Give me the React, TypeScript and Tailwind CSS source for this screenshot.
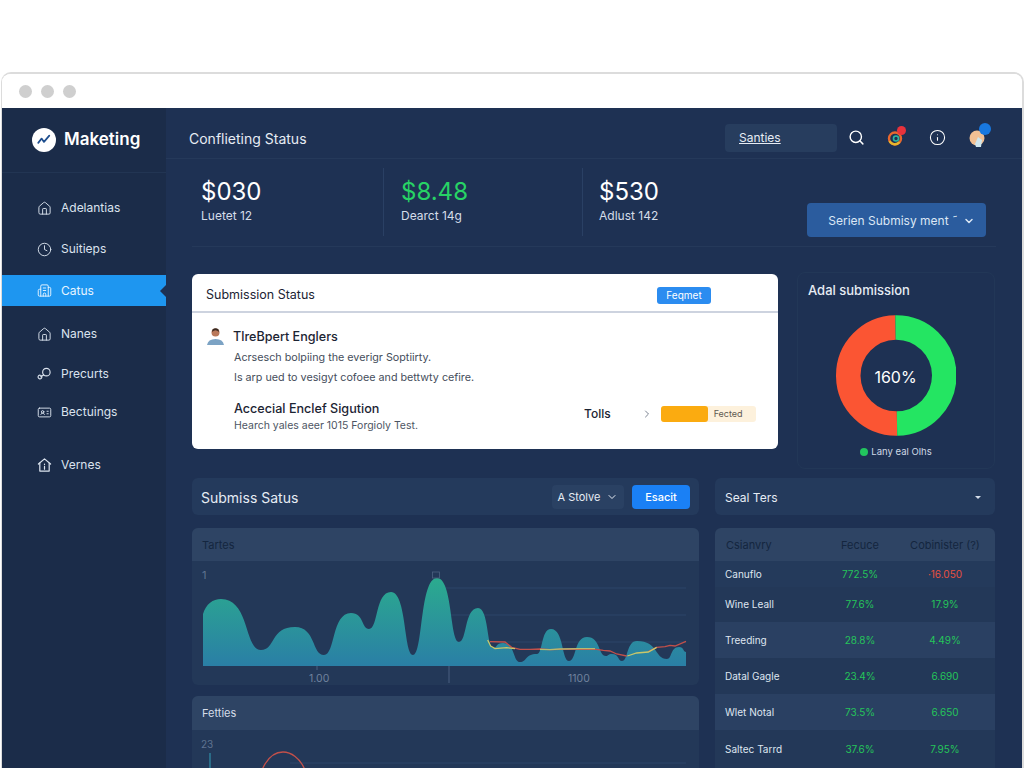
import React from "react";
import { Search, ChevronDown, ChevronRight, Info, House, Clock, Building2, IdCard } from "lucide-react";

type P = [number, number];

function smooth(points: P[]) {
  let d = "";
  for (let i = 1; i < points.length; i++) {
    const [x0, y0] = points[i - 1];
    const [x1, y1] = points[i];
    const w = x1 - x0;
    const goingDown = y1 > y0;
    const k0 = goingDown ? 0.72 : 0.42;
    const k1 = goingDown ? 0.42 : 0.72;
    d += ` C${x0 + w * k0} ${y0} ${x1 - w * k1} ${y1} ${x1} ${y1}`;
  }
  return d;
}

const area: P[] = [
  [221, 599], [261, 650], [295, 627], [324, 655], [351, 613], [369, 629], [391, 592], [413, 655], [437, 578],
  [459, 642], [478, 608], [493, 648], [503, 643], [520, 662], [537, 654], [551, 629],
  [569, 661], [587, 637], [606, 656], [612, 654], [622, 661], [637, 641], [667, 659],
  [679, 647], [686, 652],
];

const areaPath = `M203 666 L203 614 C206 604 213 599 221 599${smooth(area)} L686 666 Z`;

const pts = (l: P[]) => l.map((p) => p.join(",")).join(" ");

const zoomPt = (x: number, y: number): P => [440 + x / 3, 570 + y / 3];

const redLine: P[] = [
  [150, 215], [195, 216], [215, 232], [240, 238], [270, 238], [300, 237], [330, 239], [360, 238], [420, 237], [470, 238],
  [490, 241], [510, 243], [530, 252], [560, 258],
].map(([x, y]) => zoomPt(x, y));
const redLine2: P[] = [[625, 245], [650, 232], [675, 230], [690, 226], [705, 228], [738, 214]].map(([x, y]) => zoomPt(x, y));
const yellowLine: P[] = [[143, 210], [152, 228], [165, 236], [200, 233], [225, 236]].map(([x, y]) => zoomPt(x, y));
const yellowLine2: P[] = [[300, 238], [330, 239], [360, 237], [420, 236], [465, 236]].map(([x, y]) => zoomPt(x, y));
const yellowLine3: P[] = [[562, 258], [590, 249], [625, 246], [650, 232]].map(([x, y]) => zoomPt(x, y));

function PrecurtsIcon() {
  return (
    <svg width="16" height="16" viewBox="0 0 16 16" fill="none" stroke="currentColor" strokeWidth="1.2" strokeLinecap="round" strokeLinejoin="round">
      <circle cx="10" cy="6" r="4" />
      <path d="M7 9 4 11" />
      <path d="M5 10.5a2 2 0 1 0-2.6 2.6 2 2 0 0 0 2.6-2.6Z" />
    </svg>
  );
}

function VernesIcon() {
  return (
    <svg width="16" height="16" viewBox="0 0 16 16" fill="none" stroke="currentColor" strokeWidth="1.3" strokeLinecap="round" strokeLinejoin="round">
      <path d="M1.5 7 8 1.5 14.5 7" />
      <path d="M3 6v8.5h10V6" />
      <path d="M8 7v.5M8 9.5v3" />
    </svg>
  );
}

function NavItem({ icon, label, h, active }: { icon: React.ReactNode; label: string; h: string; active?: boolean }) {
  return (
    <div className={`relative flex items-center gap-[9px] pl-[35px] text-[12px] ${h} ${active ? "bg-[#1e96f0] text-[#e6f4ff]" : "text-[#dbe3ee]"}`}>
      <span className="flex h-[16px] w-[15px] items-center justify-center">{icon}</span>
      <span>{label}</span>
      {active && (
        <span className="absolute right-0 top-[10px] h-0 w-0 border-y-[6px] border-r-[6px] border-y-transparent border-r-[#1e3153]" />
      )}
    </div>
  );
}

function Stat({ value, label, w, pad, green, divider }: { value: string; label: string; w: string; pad: string; green?: boolean; divider?: boolean }) {
  return (
    <div className={`flex h-[68px] flex-col pt-[7px] ${w} ${pad} ${divider ? "border-r border-[#2a4064]" : ""}`}>
      <div className={`text-[24px] leading-[34px] ${green ? "text-[#27d365]" : "text-white"}`}>{value}</div>
      <div className="-mt-[1px] text-[12px] leading-[16px] text-[#d5dde9]">{label}</div>
    </div>
  );
}

const rows = [
  { n: "Canuflo", a: "772.5%", b: "·16.050", red: true, h: "h-[26px]", bg: "bg-[#243a5b]" },
  { n: "Wine Leall", a: "77.6%", b: "17.9%", h: "h-[35px]", bg: "bg-[#233858]" },
  { n: "Treeding", a: "28.8%", b: "4.49%", h: "h-[36px]", bg: "bg-[#2a4062]" },
  { n: "Datal Gagle", a: "23.4%", b: "6.690", h: "h-[36px]", bg: "bg-[#233858]" },
  { n: "Wlet Notal", a: "73.5%", b: "6.650", h: "h-[36px]", bg: "bg-[#2a4062]" },
  { n: "Saltec Tarrd", a: "37.6%", b: "7.95%", h: "h-[38px]", bg: "bg-[#233858]" },
];

export default function App() {
  return (
    <div className="h-[768px] overflow-hidden bg-white pl-[1px] pt-[72px] font-['Inter','Noto_Sans',sans-serif]">
      <div className="flex h-[696px] flex-col overflow-hidden rounded-t-[10px] border-l border-r-2 border-t-2 border-[#dcdcdc]">
        <div className="flex h-[34px] items-center gap-[9px] bg-white pl-[17px]">
          <span className="h-[13px] w-[13px] rounded-full bg-[#cfcfcf]" />
          <span className="h-[13px] w-[13px] rounded-full bg-[#cfcfcf]" />
          <span className="h-[13px] w-[13px] rounded-full bg-[#cfcfcf]" />
        </div>
        <div className="flex min-h-0 flex-1">
          <aside className="w-[164px] shrink-0 bg-[#1b2c49]">
            <div className="flex h-[65px] items-center gap-[8px] border-b border-[#223553] pl-[30px]">
              <svg width="24" height="24" viewBox="0 0 25 25">
                <circle cx="12.5" cy="12.5" r="12.5" fill="#fff" />
                <path d="M6.5 15.5 10 11l2.5 3.500L18 8" fill="none" stroke="#1f4f8f" strokeWidth="1.800" strokeLinejoin="round" strokeLinecap="round" />
              </svg>
              <span className="text-[17px] font-semibold text-white">Maketing</span>
            </div>
            <div className="pt-[17px]">
              <NavItem h="h-[36px]" label="Adelantias" icon={<House size={15} strokeWidth={1.5} />} />
              <NavItem h="h-[46px]" label="Suitieps" icon={<Clock size={15} strokeWidth={1.5} />} />
              <NavItem h="h-[31px] mt-[3px]" active label="Catus" icon={<Building2 size={15} strokeWidth={1.5} />} />
              <NavItem h="h-[36px] mt-[10px]" label="Nanes" icon={<House size={15} strokeWidth={1.5} />} />
              <NavItem h="h-[44px]" label="Precurts" icon={<PrecurtsIcon />} />
              <NavItem h="h-[32px]" label="Bectuings" icon={<IdCard size={15} strokeWidth={1.5} />} />
              <NavItem h="h-[36px] mt-[19px]" label="Vernes" icon={<VernesIcon />} />
            </div>
          </aside>

          <main className="min-w-0 flex-1 overflow-hidden bg-[#1e3153]">
            <header className="flex h-[51px] items-start border-b border-[#25395a] pl-[23px] pr-[37px] pt-[16px]">
              <div className="mt-[5px] text-[14px] leading-[20px] text-[#e6ecf4]">Conflieting Status</div>
              <div className="ml-auto flex h-[28px] w-[112px] items-center rounded-[4px] bg-[#273d5e] pl-[14px] text-[12px] text-[#e6ecf4] underline">Santies</div>
              <Search className="ml-[11px] mt-[5px] text-white" size={17} strokeWidth={2} />
              <div className="relative ml-[22px] mt-[6px] h-[16px] w-[16px]">
                <svg width="16" height="16" viewBox="0 0 16 16" fill="none">
                  <circle cx="8" cy="8.5" r="6" stroke="#e8672e" strokeWidth="2.4" />
                  <path d="M2.5 11a6 6 0 0 0 10 1" stroke="#e7b52c" strokeWidth="2.4" />
                  <circle cx="9" cy="8.5" r="2.5" stroke="#2bb7a2" strokeWidth="1.6" />
                </svg>
                <span className="absolute -right-[3px] -top-[4px] h-[9px] w-[9px] rounded-full bg-[#e8323c]" />
              </div>
              <Info className="ml-[26px] mt-[5px] text-white" size={17} strokeWidth={1.5} />
              <div className="relative ml-[23px] mt-[6px] h-[17px] w-[16px]">
                <svg width="16" height="17" viewBox="0 0 16 17">
                  <circle cx="8" cy="8" r="7.5" fill="#f2c094" />
                  <path d="M6 14l3-7 4 3-1 7H7Z" fill="#cfe6ee" />
                </svg>
                <span className="absolute -right-[6px] -top-[7px] h-[12px] w-[12px] rounded-full bg-[#1878e0]" />
              </div>
            </header>

            <div className="mx-[26px] w-[804px]">
              <div className="flex h-[88px] items-start border-b border-[#25395a] pt-[9px]">
                <Stat value="$030" label="Luetet 12" w="w-[192px]" pad="pl-[9px]" divider />
                <Stat value="$8.48" label="Dearct 14g" w="w-[199px]" pad="pl-[17px]" green divider />
                <Stat value="$530" label="Adlust 142" w="w-[224px]" pad="pl-[16px]" />
                <div className="mt-[35px] flex h-[34px] w-[179px] items-center justify-end gap-[5px] rounded-[4px] bg-[#2b5c9e] pr-[11px] pt-[2px] text-[12px] text-[#dbe7f5]">
                  <span>Serien Submisy ment ˜</span>
                  <ChevronDown size={12} strokeWidth={3} />
                </div>
              </div>

              <div className="mt-[25px] flex items-start gap-[19px]">
                <section className="mt-[2px] w-[586px] overflow-hidden rounded-[6px] bg-white text-[#1c2433]">
                  <div className="flex h-[39px] items-center justify-between border-b-2 border-[#cdd3df] pl-[14px] pr-[67px] pt-[5px]">
                    <span className="text-[12.5px]">Submission Status</span>
                    <span className="flex h-[17px] w-[54px] items-center justify-center rounded-[3px] bg-[#2b8cf0] text-[10px] text-white">Feqmet</span>
                  </div>
                  <div className="px-[21px] pt-[13px]">
                    <div className="flex items-start gap-[8px]">
                      <svg width="19" height="19" viewBox="0 0 19 19" className="-ml-[7px] mt-[1px] shrink-0">
                        <circle cx="9.5" cy="5.5" r="4" fill="#b9785a" />
                        <path d="M6 5q3.500-3.500 7 0l-.5-2.500Q9.500 0 6.500 2.500Z" fill="#3a2a22" />
                        <path d="M1 18q1-6 8.500-6T18 18Z" fill="#7ca3c4" />
                      </svg>
                      <span className="text-[12.6px] font-medium leading-[22px]">TlreBpert Englers</span>
                    </div>
                    <div className="pl-[21px] text-[10.75px] text-[#454d5b]">
                      <p className="mt-[1px] leading-[17px]">Acrsesch bolpiing the everigr Soptiirty.</p>
                      <p className="mt-[3px] leading-[17px]">Is arp ued to vesigyt cofoee and bettwty cefire.</p>
                    </div>
                    <div className="mt-[14px] flex items-center pl-[21px]">
                      <div className="w-[350px]">
                        <div className="text-[12.6px] font-medium leading-[18px]">Accecial Enclef Sigution</div>
                        <div className="text-[10.5px] leading-[16px] text-[#4d5563]">Hearch yales aeer 1015 Forgioly Test.</div>
                      </div>
                      <span className="-mt-[7px] text-[12px] font-medium">Tolls</span>
                      <ChevronRight className="-mt-[7px] ml-[30px] text-[#7c8492]" size={12} />
                      <div className="-mt-[7px] ml-[8px] flex h-[16px] w-[95px] items-center rounded-[3px] bg-[#fdf1dc]">
                        <span className="h-full w-[47px] rounded-[3px] bg-[#fbab10]" />
                        <span className="ml-[6px] text-[9px] text-[#5f5a50]">Fected</span>
                      </div>
                    </div>
                  </div>
                  <div className="h-[15px]" />
                </section>

                <section className="h-[197px] w-[198px] rounded-[8px] border border-[#223757] text-center">
                  <div className="pl-[10px] pt-[8px] text-left text-[13px] font-medium leading-[18px] text-[#e6ecf4]">Adal submission</div>
                  <div className="relative ml-[37px] mt-[16px] h-[121px] w-[121px]">
                    <svg width="121" height="121" viewBox="0 0 121 121">
                      <path d="M60.500 12.500A48 48 0 0 0 62 108.500" fill="none" stroke="#fb5533" strokeWidth="24.500" />
                      <path d="M60.500 12.500A48 48 0 0 1 62 108.500" fill="none" stroke="#24e562" strokeWidth="24.500" />
                    </svg>
                    <div className="absolute inset-0 flex items-center justify-center pt-[2px] text-[16px] text-white">160%</div>
                  </div>
                  <div className="mt-[9px] flex items-center justify-center gap-[3px] text-[9.5px] leading-[14px] text-[#cfd8e5]">
                    <span className="h-[8px] w-[8px] rounded-full bg-[#22c55e]" />
                    <span>Lany eal Olhs</span>
                  </div>
                </section>
              </div>

              <div className="mt-[9px] flex items-start gap-[16px]">
                <div className="w-[507px] shrink-0">
                  <div className="flex h-[37px] items-center rounded-[6px] bg-[#243a5c] pl-[9px] pr-[9px] pt-[1px]">
                    <span className="pt-[1px] text-[14px] text-[#e6ecf4]">Submiss Satus</span>
                    <div className="ml-auto flex h-[24px] w-[72px] items-center justify-center gap-[6px] rounded-[4px] bg-[#2a4163] text-[11px] text-[#e6ecf4]">
                      <span>A Stolve</span>
                      <ChevronDown size={12} />
                    </div>
                    <div className="ml-[8px] flex h-[24px] w-[58px] items-center justify-center rounded-[4px] bg-[#1a80f5] text-[11px] font-medium text-white">Esacit</div>
                  </div>

                  <div className="mt-[13px] overflow-hidden rounded-[6px] bg-[#233858]">
                    <div className="flex h-[33px] items-center bg-[#2e4464] pl-[10px] pt-[1px] text-[11px] text-[#14263f]">Tartes</div>
                    <svg width="507" height="124" viewBox="192 561 507 124" className="block">
                      <defs>
                        <linearGradient id="areaFill" x1="0" y1="578" x2="0" y2="666" gradientUnits="userSpaceOnUse">
                          <stop offset="0" stopColor="#2bab8e" />
                          <stop offset="1" stopColor="#2a7fa6" />
                        </linearGradient>
                      </defs>
                      <path d="M445 588H686M445 615H686M445 642H686" stroke="#2d4468" strokeWidth="1" />
                      <path d={areaPath} fill="url(#areaFill)" />
                      <polyline points={pts(redLine)} fill="none" stroke="#c2504a" strokeWidth="1.300" />
                      <polyline points={pts(redLine2)} fill="none" stroke="#c2504a" strokeWidth="1.300" />
                      <polyline points={pts(yellowLine)} fill="none" stroke="#c9c76a" strokeWidth="1.300" />
                      <polyline points={pts(yellowLine2)} fill="none" stroke="#b7bb70" strokeWidth="1.300" />
                      <polyline points={pts(yellowLine3)} fill="none" stroke="#c9c76a" strokeWidth="1.300" />
                      <path d="M317 666V670M449 666V683" stroke="#4a5f80" strokeWidth="1" />
                      <rect x="432.500" y="572" width="7" height="6" fill="none" stroke="#4d6280" strokeWidth="0.800" />
                      <text x="202" y="579" fontSize="11" fill="#5f7390">1</text>
                      <text x="309" y="682" fontSize="10.500" fill="#70829d">1.00</text>
                      <text x="568" y="682" fontSize="10.500" fill="#70829d">1100</text>
                    </svg>
                  </div>

                  <div className="mt-[11px] overflow-hidden rounded-t-[6px] bg-[#233858]">
                    <div className="flex h-[34px] items-center bg-[#2e4464] pl-[10px] text-[11px] text-[#d5dde9]">Fetties</div>
                    <svg width="507" height="38" viewBox="192 730 507 38" className="block">
                      <path d="M290 763H686" stroke="#2d4468" strokeWidth="1" />
                      <path d="M210 753V768" stroke="#2f8fa8" strokeWidth="1.200" />
                      <path d="M262 770C268 756 276 752 283 752C291 752 300 758 305 770" fill="none" stroke="#c2504a" strokeWidth="1.300" />
                      <text x="201" y="748" fontSize="10" fill="#5f7390">23</text>
                    </svg>
                  </div>
                </div>

                <div className="w-[280px] shrink-0">
                  <div className="flex h-[37px] items-center justify-between rounded-[6px] bg-[#243a5c] pl-[10px] pr-[14px] pt-[2px]">
                    <span className="text-[12px] text-[#e6ecf4]">Seal Ters</span>
                    <span className="h-0 w-0 border-x-[3px] border-t-[3px] border-x-transparent border-t-[#d5dde9]" />
                  </div>
                  <div className="mt-[13px] overflow-hidden rounded-t-[6px] text-[10px]">
                    <div className="grid h-[33px] grid-cols-[110px_70px_100px] items-center bg-[#2e4464] pt-[1px] text-[11px] text-[#14263f]">
                      <span className="pl-[11px]">Csianvry</span>
                      <span className="text-center">Fecuce</span>
                      <span className="text-center">Cobinister (?)</span>
                    </div>
                    {rows.map((r) => (
                      <div key={r.n} className={`grid grid-cols-[110px_70px_100px] items-center ${r.h} ${r.bg}`}>
                        <span className="pl-[10px] text-[#dfe6f0]">{r.n}</span>
                        <span className="text-center text-[#25c45a]">{r.a}</span>
                        <span className={`text-center ${r.red ? "text-[#e8503f]" : "text-[#25c45a]"}`}>{r.b}</span>
                      </div>
                    ))}
                  </div>
                </div>
              </div>
            </div>
          </main>
        </div>
      </div>
    </div>
  );
}
